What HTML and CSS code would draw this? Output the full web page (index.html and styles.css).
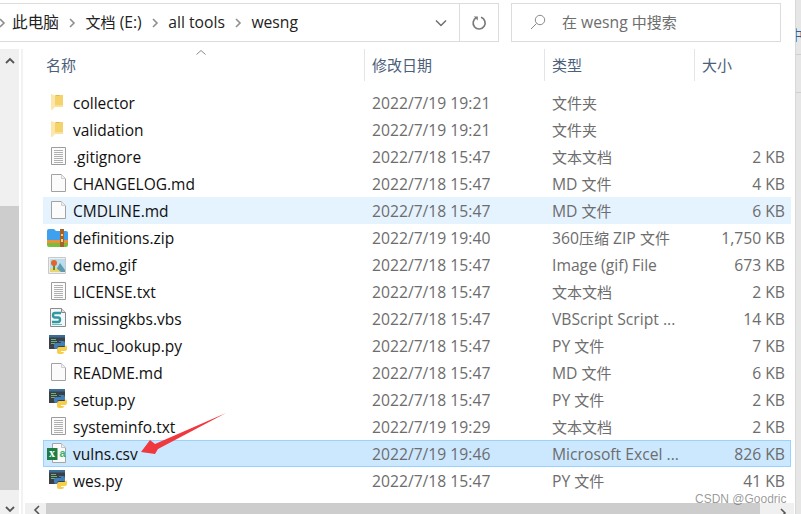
FILE: index.html
```html
<!DOCTYPE html>
<html lang="zh">
<head>
<meta charset="utf-8">
<title>wesng</title>
<link rel="stylesheet" href="styles.css">
</head>
<body>
<svg class="defs" width="0" height="0" aria-hidden="true">
  <defs>
    <symbol id="i-folder" viewBox="0 0 22 23">
      <path d="M9 4h8v12H9z" fill="#f5d36c"/>
      <path d="M10 4h3l1 1h-4z" fill="#e3b64f"/>
      <path d="M5 3l4 1.500V16l-3 3H5z" fill="#fbe7ab"/>
      <path d="M9 14h8v2H9z" fill="#f9e19a"/>
    </symbol>
    <symbol id="i-text" viewBox="0 0 22 23">
      <path d="M5.500 2.500h14v17h-14z" fill="#fbfbfb" stroke="#9c9c9c"/>
      <path d="M8 5.500h9M8 7.500h9M8 9.500h9M8 11.500h9M8 13.500h9M8 15.500h9M8 17.500h9" stroke="#b0b0b0"/>
    </symbol>
    <symbol id="i-blank" viewBox="0 0 22 23">
      <path d="M5.500 2.500h10l4 4v13h-14z" fill="#fbfbfb" stroke="#a2a2a2"/>
      <path d="M15.500 2.500v4h4" fill="#f0f0f0" stroke="#d0d0d0"/>
    </symbol>
    <symbol id="i-zip" viewBox="0 0 22 23">
      <path d="M1 5q0-2 2-2h5l2 2h10q2 0 2 2v8H1z" fill="#3fa0ee"/>
      <path d="M1 17h21v2q0 2-2 2H3q-2 0-2-2z" fill="#79bd3c"/>
      <path d="M1 14h21v3H1z" fill="#ef8f39"/>
      <path d="M14 3h4v18h-4z" fill="#a5622a"/>
      <path d="M15 8h2v2h-2zM15 13h2v3h-2z" fill="#f3cf8a"/>
    </symbol>
    <symbol id="i-gif" viewBox="0 0 22 23">
      <path d="M2.500 4.500h17v16h-17z" fill="#eee" stroke="#c9c9c9"/>
      <path d="M4 6h15v13H4z" fill="#b9dcee"/>
      <path d="M9 19l5-9 5 7v2z" fill="#5f9ab0"/>
      <path d="M4 19v-3l5-2 6 5z" fill="#e8d56c"/>
      <path d="M7 11h2v6H7z" fill="#6a8a35"/>
      <circle cx="8" cy="10" r="3" fill="#e1662d"/>
    </symbol>
    <symbol id="i-vbs" viewBox="0 0 22 23">
      <path d="M4.500 1.500h11l4 4v14h-15z" fill="#f3f7f7" stroke="#8a8a8a"/>
      <path d="M15.500 1.500v4h4" fill="#ddd" stroke="#8a8a8a"/>
      <path d="M15 6H9Q7 6 7 8.200t2 2.300h3q2 0 2 2.200T12 15H6" fill="none" stroke="#2f9aa3" stroke-width="2.400"/>
      <path d="M6 17.500h10" stroke="#67bfc4"/>
    </symbol>
    <symbol id="i-py" viewBox="0 0 22 23">
      <path d="M3 1h16v14H3z" fill="#3a4046"/>
      <path d="M3 1h16v2.500H3z" fill="#3b6e96"/>
      <path d="M5 5.500h5M5 7.500h6M5 9.500h4" stroke="#6fae7d"/>
      <path d="M13 7h4q2 0 2 2v3h-6q-2 0-2 2v1h-1q-2 0-2-2v-2q0-2 2-2h5V8h-2z" fill="#3f80b8"/>
      <path d="M19.500 11q1.500 0 1.500 2v2q0 2-2 2h-4v1h3q0 2-2 2h-2q-3 0-3-2v-3q0-2 2-2h5q1.500 0 2-2z" fill="#f5cf4b"/>
    </symbol>
    <symbol id="i-csv" viewBox="0 0 22 23">
      <path d="M6.500 1.500h9l4 4v15h-13z" fill="#fafafa" stroke="#a5a5a5"/>
      <path d="M15.500 1.500v4h4" fill="#eee" stroke="#c5c5c5"/>
      <path d="M1 6h10.500v12H1z" fill="#1e7d45"/>
    </symbol>
  </defs>
</svg>
<div class="window">
  <div class="content">
    <header class="toolbar">
      <nav class="crumbs">
        <svg class="crumb-sep crumb-cut" viewBox="0 0 8 12"><path d="M2 2l4 4-4 4" /></svg>
        <span class="crumb zh">此电脑</span>
        <svg class="crumb-sep" viewBox="0 0 8 12"><path d="M2 2l4 4-4 4" /></svg>
        <span class="crumb"><span class="zh">文档</span> (E:)</span>
        <svg class="crumb-sep" viewBox="0 0 8 12"><path d="M2 2l4 4-4 4" /></svg>
        <span class="crumb">all tools</span>
        <svg class="crumb-sep" viewBox="0 0 8 12"><path d="M2 2l4 4-4 4" /></svg>
        <span class="crumb">wesng</span>
        <svg class="dropdown" viewBox="0 0 12 8"><path d="M1 1.500l5 5 5-5" /></svg>
        <span class="refresh">
          <svg viewBox="0 0 16 16"><path d="M5.500 2.600A6 6 0 1 0 10 2.300" /><path class="tip" d="M2.800 1.500h4v4z" /></svg>
        </span>
      </nav>
      <div class="search">
        <svg viewBox="0 0 16 16"><circle cx="10" cy="6" r="4.700" /><path d="M6.500 9.500L1 15" /></svg>
        <span><span class="zh">在</span> wesng <span class="zh">中搜索</span></span>
      </div>
    </header>
    <div class="main">
      <aside class="vscroll">
        <svg class="vs-up" viewBox="0 0 10 7"><path d="M1 6l4-4 4 4" /></svg>
        <div class="vs-thumb"></div>
        <svg class="vs-down" viewBox="0 0 10 7"><path d="M1 1l4 4 4-4" /></svg>
      </aside>
      <section class="pane">
        <div class="head">
          <div class="hcell hname">名称<svg class="sort" viewBox="0 0 10 5"><path d="M.5 4.500L5 .5l4.500 4" /></svg></div>
          <div class="hcell hdate">修改日期</div>
          <div class="hcell htype">类型</div>
          <div class="hcell hsize">大小</div>
        </div>
        <div class="rows">
          <div class="row"><span class="name"><svg class="ico"><use href="#i-folder"/></svg>collector</span><span class="meta">2022/7/19 19:21</span><span class="meta zh">文件夹</span><span class="meta size"></span></div>
          <div class="row"><span class="name"><svg class="ico"><use href="#i-folder"/></svg>validation</span><span class="meta">2022/7/19 19:21</span><span class="meta zh">文件夹</span><span class="meta size"></span></div>
          <div class="row"><span class="name"><svg class="ico"><use href="#i-text"/></svg>.gitignore</span><span class="meta">2022/7/18 15:47</span><span class="meta zh">文本文档</span><span class="meta size">2 KB</span></div>
          <div class="row"><span class="name"><svg class="ico"><use href="#i-blank"/></svg>CHANGELOG.md</span><span class="meta">2022/7/18 15:47</span><span class="meta">MD <span class="zh">文件</span></span><span class="meta size">4 KB</span></div>
          <div class="row hover"><span class="name"><svg class="ico"><use href="#i-blank"/></svg>CMDLINE.md</span><span class="meta">2022/7/18 15:47</span><span class="meta">MD <span class="zh">文件</span></span><span class="meta size">6 KB</span></div>
          <div class="row"><span class="name"><svg class="ico"><use href="#i-zip"/></svg>definitions.zip</span><span class="meta">2022/7/19 19:40</span><span class="meta">360<span class="zh">压缩</span> ZIP <span class="zh">文件</span></span><span class="meta size">1,750 KB</span></div>
          <div class="row"><span class="name"><svg class="ico"><use href="#i-gif"/></svg>demo.gif</span><span class="meta">2022/7/18 15:47</span><span class="meta">Image (gif) File</span><span class="meta size">673 KB</span></div>
          <div class="row"><span class="name"><svg class="ico"><use href="#i-text"/></svg>LICENSE.txt</span><span class="meta">2022/7/18 15:47</span><span class="meta zh">文本文档</span><span class="meta size">2 KB</span></div>
          <div class="row"><span class="name"><svg class="ico"><use href="#i-vbs"/></svg>missingkbs.vbs</span><span class="meta">2022/7/18 15:47</span><span class="meta">VBScript Script ...</span><span class="meta size">14 KB</span></div>
          <div class="row"><span class="name"><svg class="ico"><use href="#i-py"/></svg>muc_lookup.py</span><span class="meta">2022/7/18 15:47</span><span class="meta">PY <span class="zh">文件</span></span><span class="meta size">7 KB</span></div>
          <div class="row"><span class="name"><svg class="ico"><use href="#i-blank"/></svg>README.md</span><span class="meta">2022/7/18 15:47</span><span class="meta">MD <span class="zh">文件</span></span><span class="meta size">6 KB</span></div>
          <div class="row"><span class="name"><svg class="ico"><use href="#i-py"/></svg>setup.py</span><span class="meta">2022/7/18 15:47</span><span class="meta">PY <span class="zh">文件</span></span><span class="meta size">2 KB</span></div>
          <div class="row"><span class="name"><svg class="ico"><use href="#i-text"/></svg>systeminfo.txt</span><span class="meta">2022/7/19 19:29</span><span class="meta zh">文本文档</span><span class="meta size">2 KB</span></div>
          <div class="row selected"><span class="name"><svg class="ico"><use href="#i-csv"/></svg><b class="xl">x</b><b class="xa">a</b>vulns.csv</span><span class="meta">2022/7/19 19:46</span><span class="meta">Microsoft Excel ...</span><span class="meta size">826 KB</span></div>
          <div class="row"><span class="name"><svg class="ico"><use href="#i-py"/></svg>wes.py</span><span class="meta">2022/7/18 15:47</span><span class="meta">PY <span class="zh">文件</span></span><span class="meta size">41 KB</span></div>
        </div>
        <div class="hscroll">
          <svg class="hs-left" viewBox="0 0 7 10"><path d="M6 1L2 5l4 4" /></svg>
          <div class="hs-thumb"></div>
          <svg class="hs-right" viewBox="0 0 7 10"><path d="M1 1l4 4-4 4" /></svg>
        </div>
      </section>
    </div>
  </div>
  <aside class="edge">
    <span class="edge-text">中</span>
    <i class="edge-line"></i>
    <i class="edge-line"></i>
  </aside>
</div>
<svg class="arrow" viewBox="0 0 85 45"><path d="M0 39L9 27 14 31 85 0 17 36 14 41z" /></svg>
<div class="mark">CSDN @Goodric</div>
</body>
</html>
```
FILE: styles.css
```css
* { box-sizing: border-box; }
html, body { margin: 0; padding: 0; height: 100%; background: #fff; }
body {
  position: relative;
  overflow: hidden;
  font-family: "Open Sans", "Noto Sans CJK SC", sans-serif;
  font-size: 15px;
  color: #1b1b1b;
}
.defs { position: absolute; }
.zh { font-size: 15px; }
.window { display: flex; height: 514px; width: 801px; overflow: hidden; }
.content { flex: 0 0 795px; display: flex; flex-direction: column; min-width: 0; }

.toolbar { display: flex; gap: 12px; padding: 3px 14px 0 0; height: 49px; flex: none; }
.crumbs {
  flex: 0 0 499px;
  height: 39px;
  display: flex;
  align-items: center;
  border: 1.500px solid #dcdcdc;
  border-left: 0;
  color: #222;
}
.crumb { white-space: nowrap; font-size: 15.700px; padding-bottom: 2px; }
.crumb-sep { width: 8px; height: 12px; margin: 0 9.500px 0 9px; flex: none; }
.crumb-sep path { fill: none; stroke: #8f8f8f; stroke-width: 1.600; }
.crumb-cut { margin: 0 6px 0 -2px; }
.dropdown { width: 12px; height: 8px; margin-left: auto; margin-right: 12px; flex: none; }
.dropdown path { fill: none; stroke: #6e6e6e; stroke-width: 1.500; }
.refresh {
  flex: 0 0 39px;
  height: 100%;
  border-left: 1.500px solid #dcdcdc;
  display: flex;
  align-items: center;
  justify-content: center;
}
.refresh svg { width: 16px; height: 16px; }
.refresh path { fill: none; stroke: #7a7a7a; stroke-width: 1.700; }
.refresh .tip { fill: #7a7a7a; stroke: none; }
.search {
  flex: 0 0 270px;
  height: 39px;
  border: 1.500px solid #dcdcdc;
  display: flex;
  align-items: center;
  gap: 16px;
  padding-left: 18px;
  padding-bottom: 1px;
  color: #6d6d6d;
  font-size: 15.700px;
}
.search svg { width: 16px; height: 16px; flex: none; }
.search circle, .search path { fill: none; stroke: #8a8a8a; stroke-width: 1; }

.main { flex: 1; display: flex; min-height: 0; }
.vscroll {
  flex: 0 0 19px;
  background: #f0f0f0;
  display: flex;
  flex-direction: column;
  align-items: center;
}
.vs-up { width: 10px; height: 7px; margin: 8px 0 0; flex: none; }
.vs-down { width: 10px; height: 7px; margin: 16px 0 0; flex: none; }
.vs-up path, .vs-down path { fill: none; stroke: #555; stroke-width: 1.800; }
.vs-thumb { width: 100%; height: 284px; background: #cdcdcd; margin-top: 142px; flex: none; }

.pane {
  flex: 1;
  margin-left: 2px;
  border-left: 2px solid #f2f2f2;
  display: flex;
  flex-direction: column;
  min-width: 0;
}
.head { height: 32px; display: flex; flex: none; color: #4c607a; font-size: 15px; }
.hcell { position: relative; display: flex; align-items: center; padding-left: 7px; padding-bottom: 2px; border-right: 1px solid #e5e5e5; }
.hname { flex: 0 0 342px; padding-left: 23px; }
.hdate { flex: 0 0 180px; }
.htype { flex: 0 0 150px; }
.hsize { flex: 1; border-right: 0; }
.sort { position: absolute; left: 173px; top: 1px; width: 10px; height: 5px; }
.sort path { fill: none; stroke: #8a8a8a; stroke-width: 1; }

.rows { margin: 8px 4px 0 20px; flex: none; }
.row {
  height: 27px;
  display: grid;
  grid-template-columns: 328px 180px 150px 1fr;
  align-items: center;
  border: 1px solid transparent;
  padding-right: 5px;
  white-space: nowrap;
}
.row.hover { background: #e5f3ff; border-color: #e5f3ff; }
.row.selected { background: #cce8ff; border-color: #99d1ff; }
.name { display: flex; align-items: center; color: #101010; position: relative; font-size: 15.500px; }
.ico { width: 22px; height: 23px; margin: 0 5px 0 2px; flex: none; }
.xl {
  position: absolute;
  left: 3px;
  top: 3px;
  width: 10px;
  font: bold 12px/16px "Liberation Serif", serif;
  color: #fff;
  text-align: center;
}
.xa {
  position: absolute;
  left: 15px;
  top: 3px;
  width: 7px;
  font: bold 11px/16px "Liberation Sans", sans-serif;
  color: #35b36f;
  text-align: center;
}
.meta { color: #6d6d6d; font-size: 15.700px; }
.meta .zh, .meta.zh { font-size: 15px; }
.size { text-align: right; }

.hscroll { margin: auto 1px 0 2px; height: 11px; display: flex; align-items: flex-start; background: #f0f0f0; flex: none; }
.hs-left { width: 7px; height: 10px; margin: 2px 6px 0 8px; flex: none; }
.hs-right { width: 7px; height: 10px; margin: 5px 0 0 20px; flex: none; }
.hs-left path, .hs-right path { fill: none; stroke: #555; stroke-width: 1.600; }
.hs-thumb { width: 714px; height: 11px; background: #cdcdcd; flex: none; }

.edge {
  flex: 0 0 6px;
  background: #e6e6e6;
  border-left: 1px solid #d8d8d8;
  overflow: hidden;
  display: flex;
  flex-direction: column;
  padding-top: 26px;
}
.edge-text { margin-left: -7px; font-size: 14px; line-height: 18px; color: #3b5d8c; white-space: nowrap; }
.edge-line { display: block; height: 1px; background: #cfcfcf; margin-top: 10px; flex: none; }
.edge-line + .edge-line { margin-top: 37px; }

.arrow { position: absolute; left: 141px; top: 413px; width: 85px; height: 45px; }
.arrow path { fill: #f0383f; }
.mark {
  position: absolute;
  left: 695px;
  top: 490px;
  font: 12px/18px "Liberation Sans", sans-serif;
  color: rgba(90, 90, 90, .62);
  white-space: nowrap;
}
```
